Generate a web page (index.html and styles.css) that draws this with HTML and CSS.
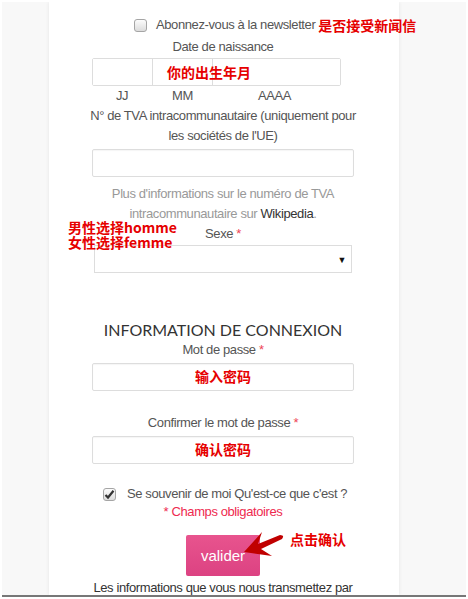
FILE: index.html
```html
<!DOCTYPE html>
<html lang="fr">
  <head>
    <meta charset="UTF-8" />
    <meta name="viewport" content="width=device-width, initial-scale=1.0" />
    <title>Inscription</title>
    <link rel="stylesheet" href="styles.css">
  </head>
  <body>
    <div class="frame">
      <div class="panel">
        <form class="form">
          <!-- Newsletter -->
          <label class="check-row newsletter">
            <span class="box"></span>
            <span>Abonnez-vous à la newsletter</span>
            <span class="note note-inline">是否接受新闻信</span>
          </label>

          <div class="label">Date de naissance</div>
          <div class="date-box">
            <input type="text" class="date-part dd" />
            <input type="text" class="date-part mm" />
            <input type="text" class="date-part yy" />
            <span class="note date-note">你的出生年月</span>
          </div>
          <div class="date-hints">
            <span class="hint-dd">JJ</span>
            <span class="hint-mm">MM</span>
            <span class="hint-yy">AAAA</span>
          </div>

          <div class="label tva-label">N° de TVA intracommunautaire (uniquement pour les sociétés de l'UE)</div>
          <input type="text" class="field" />
          <p class="help">Plus d'informations sur le numéro de TVA intracommunautaire sur <a href="#">Wikipedia</a>.</p>

          <div class="sexe-group">
            <div class="note sexe-note">男性选择homme<br />女性选择femme</div>
            <div class="label">Sexe <span class="req">*</span></div>
            <div class="select-wrap">
              <select class="select">
                <option></option>
                <option>homme</option>
                <option>femme</option>
              </select>
            </div>
          </div>

          <!-- Connexion -->
          <h2 class="section-title">INFORMATION DE CONNEXION</h2>
          <div class="label">Mot de passe <span class="req">*</span></div>
          <input type="password" class="field field-note" placeholder="输入密码" />

          <div class="label confirm-label">Confirmer le mot de passe <span class="req">*</span></div>
          <input type="password" class="field field-note" placeholder="确认密码" />

          <label class="check-row remember">
            <span class="box checked">
              <svg width="11" height="11" viewBox="0 0 11 11"><path d="M1.5 6 L4 8.5 L9.5 1.8" fill="none" stroke="#333" stroke-width="2.2" /></svg>
            </span>
            <span>Se souvenir de moi Qu'est-ce que c'est ?</span>
          </label>
          <div class="required">* Champs obligatoires</div>

          <div class="submit-row">
            <button type="submit" class="submit-btn">valider</button>
            <svg class="arrow" width="46" height="28" viewBox="0 0 46 28">
              <path d="M1 21 L19 1 L15 13 L37 4 Q42 4 39 8 L18 18 L29 25 Z" fill="#c00000" />
            </svg>
            <span class="note click-note">点击确认</span>
          </div>

          <p class="footer-text">Les informations que vous nous transmettez par</p>
        </form>
      </div>
    </div>
  </body>
</html>
```

FILE: styles.css
```css
body {
  margin: 0;
  background: #fff;
  font-family: "Liberation Sans", Arial, sans-serif;
  font-size: 13px;
  line-height: 20px;
  letter-spacing: -0.4px;
  color: #555;
}
.frame {
  margin: 2px 2px 0 2px;
  height: 593px;
  background: #f8f8f8;
  border-bottom: 2px solid #777;
  overflow: hidden;
}
.panel {
  margin-left: 47px;
  width: 350px;
  height: 100%;
  background: #fff;
  box-shadow: 0 0 4px rgba(0, 0, 0, 0.08);
}
.form {
  width: 262px;
  margin-left: 43px;
  padding-top: 13px;
  text-align: center;
}
.note {
  color: #e60000;
  font-family: "Noto Sans CJK SC", sans-serif;
  font-weight: bold;
  font-size: 14px;
  letter-spacing: 0;
  white-space: nowrap;
}
.label {
  color: #555;
}
.req {
  color: #ee4455;
}
.tva-label {
  margin: 0 -6px;
}

/* checkboxes */
.check-row {
  display: flex;
  align-items: center;
  white-space: nowrap;
  height: 20px;
}
.box {
  flex: none;
  display: inline-block;
  box-sizing: border-box;
  width: 13px;
  height: 13px;
  border: 1px solid #a5a5a5;
  border-radius: 3px;
  background: linear-gradient(#fcfcfc, #dcdcdc);
  position: relative;
}
.box svg {
  position: absolute;
  left: 0;
  top: 0;
}
.newsletter {
  margin-left: 42px;
  margin-bottom: 2px;
}
.newsletter .box {
  margin-right: 9px;
}
.note-inline {
  margin-left: 3px;
}
.remember {
  margin-top: 20px;
  margin-left: 11px;
}
.remember .box {
  margin-right: 11px;
}
.required {
  color: #ee2a4f;
  line-height: 16px;
}

/* date */
.date-box {
  position: relative;
  display: flex;
  margin-top: 1px;
  width: 249px;
  height: 28px;
  box-sizing: border-box;
  border: 1px solid #ddd;
  border-radius: 2px;
}
.date-part {
  border: none;
  height: 100%;
  padding: 0;
  min-width: 0;
  box-sizing: border-box;
}
.dd,
.mm {
  width: 60px;
  border-right: 1px solid #ddd;
}
.yy {
  flex: 1;
  width: 0;
}
.date-note {
  position: absolute;
  left: 74px;
  top: 3px;
  line-height: 20px;
}
.date-hints {
  position: relative;
  height: 20px;
  text-align: left;
}
.date-hints span {
  position: absolute;
  top: 0;
}
.hint-dd {
  left: 24px;
}
.hint-mm {
  left: 80px;
}
.hint-yy {
  left: 166px;
}

/* text fields */
.field {
  display: block;
  width: 100%;
  height: 28px;
  margin-top: 3px;
  box-sizing: border-box;
  border: 1px solid #ddd;
  border-radius: 2px;
  box-shadow: inset 0 1px 1px rgba(0, 0, 0, 0.04);
  text-align: center;
}
.field-note::placeholder {
  color: #e60000;
  font-family: "Noto Sans CJK SC", sans-serif;
  font-weight: bold;
  font-size: 14px;
}
.help {
  margin: 7px 0 0;
  color: #999;
}
.help a {
  color: #333;
  text-decoration: none;
}

/* sexe */
.sexe-group {
  position: relative;
}
.sexe-note {
  position: absolute;
  z-index: 1;
  left: -24px;
  top: -4px;
  line-height: 15px;
  text-align: left;
}
.select-wrap {
  position: relative;
  margin: 1px 2px 0;
}
.select-wrap::after {
  content: "▼";
  position: absolute;
  right: 6px;
  top: 5px;
  font-size: 9px;
  color: #111;
  pointer-events: none;
}
.select {
  appearance: none;
  display: block;
  width: 100%;
  height: 28px;
  border: 1px solid #ddd;
  border-radius: 0;
  background: #fff;
}

/* connexion */
.section-title {
  margin: 47px 0 0;
  font-family: Lato, sans-serif;
  font-weight: normal;
  font-size: 16px;
  line-height: 20px;
  letter-spacing: 0;
  color: #333;
}
.confirm-label {
  margin-top: 22px;
}

/* submit */
.submit-row {
  position: relative;
  margin-top: 15px;
  height: 41px;
}
.submit-btn {
  width: 74px;
  height: 41px;
  border: none;
  border-radius: 2px;
  background: linear-gradient(#e8548e, #dc4282);
  color: #fff;
  font-family: "Liberation Sans", Arial, sans-serif;
  font-size: 15px;
}
.arrow {
  position: absolute;
  left: 151px;
  top: -4px;
}
.click-note {
  position: absolute;
  left: 198px;
  top: -6px;
  line-height: 20px;
}
.footer-text {
  margin: 2px 0 0;
  color: #333;
  white-space: nowrap;
}
```
